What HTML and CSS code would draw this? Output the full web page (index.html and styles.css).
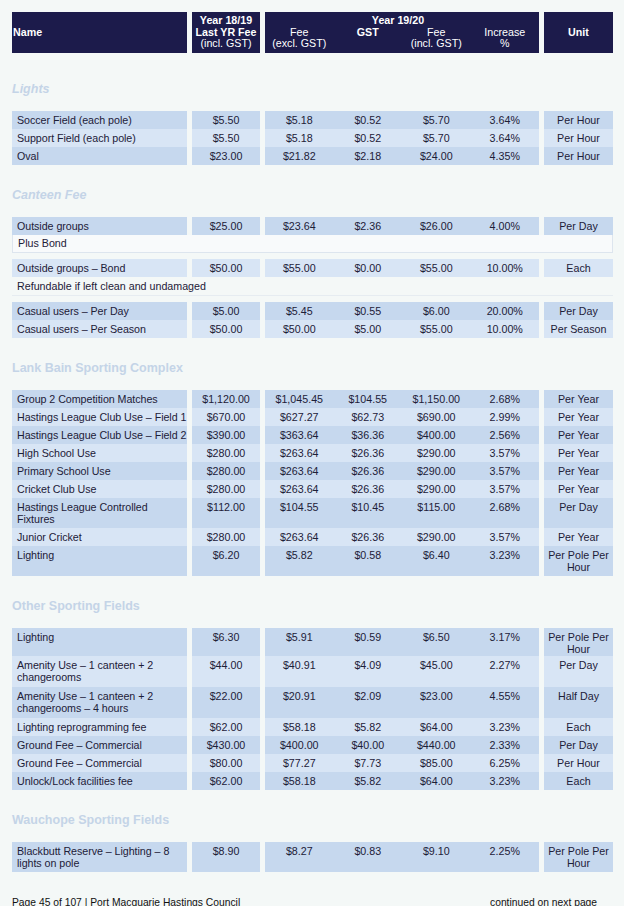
FILE: index.html
```html
<!DOCTYPE html>
<html>
<head>
<meta charset="utf-8">
<link rel="stylesheet" href="styles.css">
</head>
<body>
<div class="page">
  <div class="thead">
    <div class="h hname"><b>Name</b></div>
    <div class="h"><b>Year 18/19</b><b>Last YR Fee</b><span>(incl. GST)</span></div>
    <div class="h hgrp">
      <b class="yr">Year 19/20</b>
      <div class="sub">
        <div><span>Fee</span><span>(excl. GST)</span></div>
        <div><b>GST</b><span>&nbsp;</span></div>
        <div><span>Fee</span><span>(incl. GST)</span></div>
        <div><span>Increase</span><span>%</span></div>
      </div>
    </div>
    <div class="h"><b>Unit</b></div>
  </div>

  <div class="title it first">Lights</div>
  <div class="row d"><div class="c name">Soccer Field (each pole)</div><div class="c num">$5.50</div><div class="c grp"><span>$5.18</span><span>$0.52</span><span>$5.70</span><span>3.64%</span></div><div class="c num">Per Hour</div></div>
  <div class="row l"><div class="c name">Support Field (each pole)</div><div class="c num">$5.50</div><div class="c grp"><span>$5.18</span><span>$0.52</span><span>$5.70</span><span>3.64%</span></div><div class="c num">Per Hour</div></div>
  <div class="row d"><div class="c name">Oval</div><div class="c num">$23.00</div><div class="c grp"><span>$21.82</span><span>$2.18</span><span>$24.00</span><span>4.35%</span></div><div class="c num">Per Hour</div></div>

  <div class="title it">Canteen Fee</div>
  <div class="row d"><div class="c name">Outside groups</div><div class="c num">$25.00</div><div class="c grp"><span>$23.64</span><span>$2.36</span><span>$26.00</span><span>4.00%</span></div><div class="c num">Per Day</div></div>
  <div class="note box">Plus Bond</div>
  <div class="row l"><div class="c name">Outside groups – Bond</div><div class="c num">$50.00</div><div class="c grp"><span>$55.00</span><span>$0.00</span><span>$55.00</span><span>10.00%</span></div><div class="c num">Each</div></div>
  <div class="note plain">Refundable if left clean and undamaged</div>
  <div class="row d"><div class="c name">Casual users – Per Day</div><div class="c num">$5.00</div><div class="c grp"><span>$5.45</span><span>$0.55</span><span>$6.00</span><span>20.00%</span></div><div class="c num">Per Day</div></div>
  <div class="row l"><div class="c name">Casual users – Per Season</div><div class="c num">$50.00</div><div class="c grp"><span>$50.00</span><span>$5.00</span><span>$55.00</span><span>10.00%</span></div><div class="c num">Per Season</div></div>

  <div class="title">Lank Bain Sporting Complex</div>
  <div class="row d"><div class="c name">Group 2 Competition Matches</div><div class="c num">$1,120.00</div><div class="c grp"><span>$1,045.45</span><span>$104.55</span><span>$1,150.00</span><span>2.68%</span></div><div class="c num">Per Year</div></div>
  <div class="row l"><div class="c name">Hastings League Club Use – Field 1</div><div class="c num">$670.00</div><div class="c grp"><span>$627.27</span><span>$62.73</span><span>$690.00</span><span>2.99%</span></div><div class="c num">Per Year</div></div>
  <div class="row d"><div class="c name">Hastings League Club Use – Field 2</div><div class="c num">$390.00</div><div class="c grp"><span>$363.64</span><span>$36.36</span><span>$400.00</span><span>2.56%</span></div><div class="c num">Per Year</div></div>
  <div class="row l"><div class="c name">High School Use</div><div class="c num">$280.00</div><div class="c grp"><span>$263.64</span><span>$26.36</span><span>$290.00</span><span>3.57%</span></div><div class="c num">Per Year</div></div>
  <div class="row d"><div class="c name">Primary School Use</div><div class="c num">$280.00</div><div class="c grp"><span>$263.64</span><span>$26.36</span><span>$290.00</span><span>3.57%</span></div><div class="c num">Per Year</div></div>
  <div class="row l"><div class="c name">Cricket Club Use</div><div class="c num">$280.00</div><div class="c grp"><span>$263.64</span><span>$26.36</span><span>$290.00</span><span>3.57%</span></div><div class="c num">Per Year</div></div>
  <div class="row d"><div class="c name">Hastings League Controlled<br>Fixtures</div><div class="c num">$112.00</div><div class="c grp"><span>$104.55</span><span>$10.45</span><span>$115.00</span><span>2.68%</span></div><div class="c num">Per Day</div></div>
  <div class="row l"><div class="c name">Junior Cricket</div><div class="c num">$280.00</div><div class="c grp"><span>$263.64</span><span>$26.36</span><span>$290.00</span><span>3.57%</span></div><div class="c num">Per Year</div></div>
  <div class="row d"><div class="c name">Lighting</div><div class="c num">$6.20</div><div class="c grp"><span>$5.82</span><span>$0.58</span><span>$6.40</span><span>3.23%</span></div><div class="c num">Per Pole Per<br>Hour</div></div>

  <div class="title">Other Sporting Fields</div>
  <div class="row d r28"><div class="c name">Lighting</div><div class="c num">$6.30</div><div class="c grp"><span>$5.91</span><span>$0.59</span><span>$6.50</span><span>3.17%</span></div><div class="c num">Per Pole Per<br>Hour</div></div>
  <div class="row l r31"><div class="c name">Amenity Use – 1 canteen + 2<br>changerooms</div><div class="c num">$44.00</div><div class="c grp"><span>$40.91</span><span>$4.09</span><span>$45.00</span><span>2.27%</span></div><div class="c num">Per Day</div></div>
  <div class="row d r31"><div class="c name">Amenity Use – 1 canteen + 2<br>changerooms – 4 hours</div><div class="c num">$22.00</div><div class="c grp"><span>$20.91</span><span>$2.09</span><span>$23.00</span><span>4.55%</span></div><div class="c num">Half Day</div></div>
  <div class="row l"><div class="c name">Lighting reprogramming fee</div><div class="c num">$62.00</div><div class="c grp"><span>$58.18</span><span>$5.82</span><span>$64.00</span><span>3.23%</span></div><div class="c num">Each</div></div>
  <div class="row d"><div class="c name">Ground Fee – Commercial</div><div class="c num">$430.00</div><div class="c grp"><span>$400.00</span><span>$40.00</span><span>$440.00</span><span>2.33%</span></div><div class="c num">Per Day</div></div>
  <div class="row l"><div class="c name">Ground Fee – Commercial</div><div class="c num">$80.00</div><div class="c grp"><span>$77.27</span><span>$7.73</span><span>$85.00</span><span>6.25%</span></div><div class="c num">Per Hour</div></div>
  <div class="row d"><div class="c name">Unlock/Lock facilities fee</div><div class="c num">$62.00</div><div class="c grp"><span>$58.18</span><span>$5.82</span><span>$64.00</span><span>3.23%</span></div><div class="c num">Each</div></div>

  <div class="title">Wauchope Sporting Fields</div>
  <div class="row d"><div class="c name">Blackbutt Reserve – Lighting – 8<br>lights on pole</div><div class="c num">$8.90</div><div class="c grp"><span>$8.27</span><span>$0.83</span><span>$9.10</span><span>2.25%</span></div><div class="c num">Per Pole Per<br>Hour</div></div>

  <div class="footer"><span class="fl">Page 45 of 107 | Port Macquarie Hastings Council</span><span>continued on next page</span></div>
</div>
</body>
</html>
```

FILE: styles.css
```css
html, body {
  margin: 0;
  background: #f4f8f7;
}
body {
  font-family: "Liberation Sans", Arial, sans-serif;
  font-size: 10.7px;
  color: #1d2038;
  overflow: hidden;
}
.page {
  padding: 12px 0 0 12px;
  width: 601px;
}
.thead {
  display: grid;
  grid-template-columns: 175px 68px 274px 69px;
  column-gap: 5px;
  height: 41px;
}
.h {
  background: #1c1b4b;
  color: #fff;
  line-height: 11.5px;
  display: flex;
  flex-direction: column;
  justify-content: center;
  align-items: center;
  text-align: center;
}
.h span { font-weight: normal; }
.hname {
  align-items: flex-start;
  padding-left: 1px;
}
.hgrp {
  justify-content: center;
  align-items: stretch;
}
.hgrp .yr {
  display: block;
  text-align: center;
  padding-right: 8px;
}
.sub {
  display: grid;
  grid-template-columns: repeat(4, 1fr);
}
.sub > div {
  display: flex;
  flex-direction: column;
  align-items: center;
}
.title {
  margin: 22px 0 14px;
  font-size: 12.5px;
  font-weight: bold;
  line-height: 16px;
  color: #c4d4e7;
}
.title.it { font-style: italic; }
.title.first { margin-top: 28px; }
.row {
  display: grid;
  grid-template-columns: 175px 68px 274px 69px;
  column-gap: 5px;
  line-height: 12px;
}
.c {
  padding: 3px 5px;
}
.name {
  white-space: nowrap;
  padding-right: 0;
  letter-spacing: -0.05px;
}
.num {
  text-align: center;
  padding: 3px 0;
}
.grp {
  display: grid;
  grid-template-columns: repeat(4, 1fr);
  text-align: center;
  padding: 3px 0;
}
.row.d .c { background: #c6d8ee; }
.row.l .c { background: #d8e5f5; }
.row.r28 .c { padding-bottom: 1px; }
.row.r31 .c { padding-bottom: 4px; }
.note {
  line-height: 12px;
  padding: 3px 5px;
  box-sizing: border-box;
  height: 18px;
}
.note.box {
  background: #f8fafb;
  border: 1px solid #dde5ee;
  border-top: none;
  margin-bottom: 6px;
  padding-top: 2px;
}
.note.plain {
  border-bottom: 1px solid #e6ecf1;
  margin-bottom: 6px;
  height: 19px;
}
.footer {
  display: flex;
  margin-top: 25px;
  font-size: 10.3px;
  line-height: 12px;
  color: #111;
}
.fl { width: 478px; }
```
